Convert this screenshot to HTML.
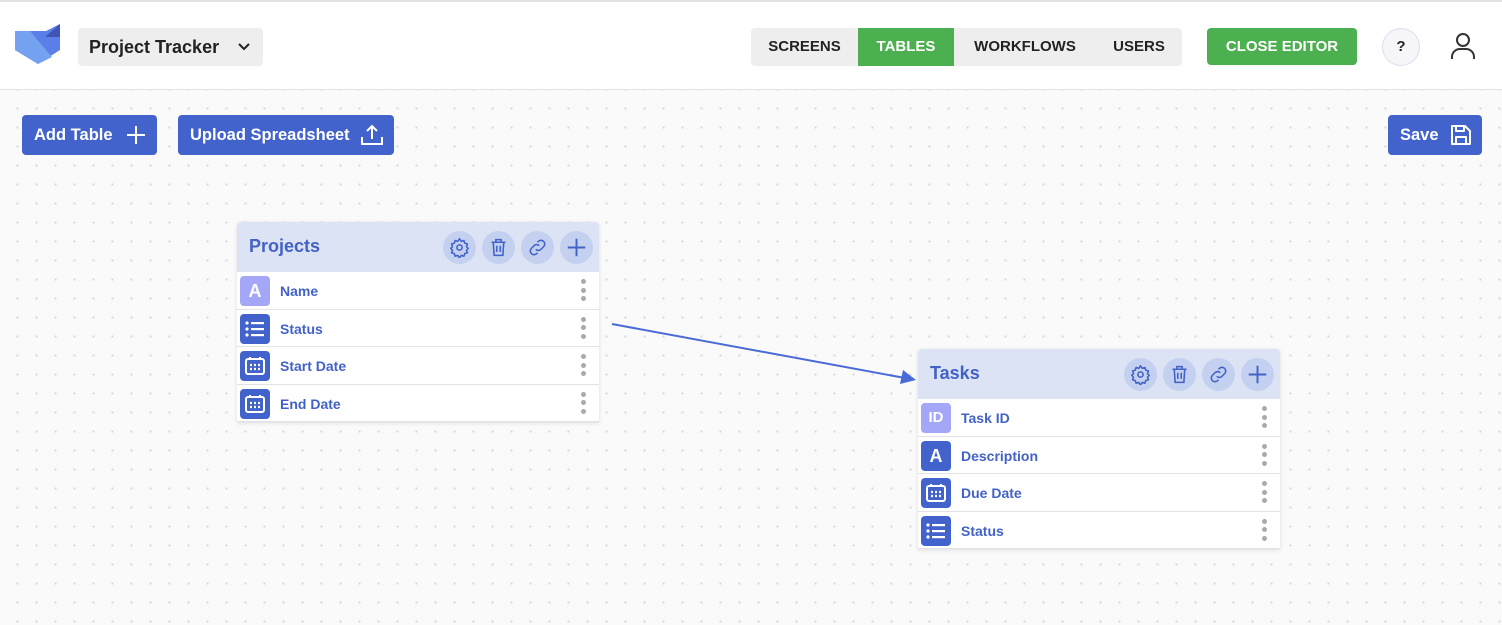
<!DOCTYPE html>
<html><head><meta charset="utf-8"><style>
*{box-sizing:border-box;margin:0;padding:0}
body{width:1502px;height:625px;overflow:hidden;font-family:"Liberation Sans",sans-serif;position:relative;background:#fafafb;
background-image:radial-gradient(circle,#d6d8dd 1px,transparent 1.3px);background-size:19px 19px;background-position:8px 4px}
.hdr{position:absolute;left:0;top:0;width:1502px;height:90px;background:#fff;border-top:2px solid #e3e3e3;border-bottom:1px solid #e3e3e3}
.abs{position:absolute}
.proj{left:78px;top:26px;width:185px;height:38px;background:#eeeeef;border-radius:4px;font-weight:bold;font-size:18px;color:#222;padding:9px 11px}
.tabs{left:751px;top:26px;width:431px;height:38px;background:#eeeeef;border-radius:4px;display:flex;font-weight:bold;font-size:15px;color:#222}
.tabs div{height:38px;line-height:38px;text-align:center}
.close{left:1207px;top:26px;width:150px;height:37px;background:#4caf50;color:#fff;border-radius:4px;font-weight:bold;font-size:15px;text-align:center;line-height:37px}
.q{left:1382px;top:26px;width:38px;height:38px;border-radius:50%;border:1px solid #dde;background:#f6f6f9;text-align:center;line-height:36px;font-weight:bold;font-size:15px;color:#222}
.btn{height:40px;top:115px;background:#4262cc;color:#fff;border-radius:4px;font-weight:bold;font-size:16.5px;display:flex;align-items:center;padding-left:12px}
.btn svg{position:absolute;right:10px;top:9px}
.card{position:absolute;width:362px;background:#fff;box-shadow:0 1px 4px rgba(0,0,0,.12);border-radius:4px 4px 0 0}
.ch{height:50px;background:#dce3f5;border-radius:4px 4px 0 0;position:relative}
.ch .t{position:absolute;left:12px;top:14px;font-weight:bold;font-size:18px;color:#4262c7}
.cb{position:absolute;top:9px;width:33px;height:33px;border-radius:50%;background:#c4d0f0}
.cb svg{position:absolute;left:6px;top:6px}
.row{height:37.5px;border-bottom:1px solid #e2e2e6;position:relative}
.ic{position:absolute;left:3px;top:4px;width:30px;height:30px;border-radius:4px;background:#4262cc;color:#fff;font-weight:bold;text-align:center;line-height:30px;font-size:18px}
.ic.l{background:#a4a6f7}
.ic svg{position:absolute;left:4px;top:4px}
.row .n{position:absolute;left:43px;top:11px;font-weight:bold;font-size:14px;color:#4262c7}
.k{position:absolute;right:13px;top:7px;width:5px}
.k i{display:block;width:5px;height:5px;border-radius:50%;background:#aaa;margin-bottom:3.5px}
</style></head><body>
<div class="hdr">
<svg class="abs" style="left:0;top:-2px" width="70" height="70" viewBox="0 0 70 70"><polygon points="15,31 46,31 60,24 60,50 38,64 15,50" fill="#5b7fe8"/><polygon points="15,31 30,31 52,57 38,64 15,50" fill="#74a2f1"/><polygon points="60,24 60,37 45,37" fill="#3e55b5"/></svg>
<div class="abs proj">Project Tracker <svg style="position:absolute;right:12px;top:14px" width="14" height="10" viewBox="0 0 14 10"><path d="M2 2l5 5 5-5" stroke="#222" stroke-width="2" fill="none"/></svg></div>
<div class="abs tabs"><div style="width:107px">SCREENS</div><div style="width:96px;background:#4caf50;color:#fff">TABLES</div><div style="width:142px">WORKFLOWS</div><div style="width:86px">USERS</div></div>
<div class="abs close">CLOSE EDITOR</div>
<div class="abs q">?</div>
<svg class="abs" style="left:1450px;top:30px" width="26" height="28" viewBox="0 0 26 28"><circle cx="13" cy="8" r="6" stroke="#333" stroke-width="2" fill="none"/><path d="M2 27v-2a8 8 0 0 1 8-8h6a8 8 0 0 1 8 8v2" stroke="#333" stroke-width="2" fill="none"/></svg>
</div>
<div class="abs btn" style="left:22px;width:135px">Add Table<svg width="22" height="22" viewBox="0 0 22 22"><path d="M11 2v18M2 11h18" stroke="#fff" stroke-width="2"/></svg></div>
<div class="abs btn" style="left:178px;width:216px">Upload Spreadsheet<svg width="24" height="22" viewBox="0 0 24 22"><path d="M12 15V2M7 7l5-5 5 5M2 13v7h20v-7" stroke="#fff" stroke-width="2" fill="none"/></svg></div>
<div class="abs btn" style="left:1388px;width:94px">Save<svg width="22" height="22" viewBox="0 0 22 22"><path d="M2 2h13l5 5v13H2z M6 2v5h8V2 M6 20v-7h10v7" stroke="#fff" stroke-width="2" fill="none" stroke-linejoin="round"/></svg></div>
<svg class="abs" style="left:0;top:0" width="1502" height="625"><line x1="612" y1="324" x2="905" y2="378" stroke="#4a6ad6" stroke-width="2"/><polygon points="916,380 900,384 903,370" fill="#4a6ad6"/></svg>
<div class="card" style="left:237px;top:222px">
<div class="ch"><div class="t">Projects</div>
<div class="cb" style="left:206px"><svg width="21" height="21" viewBox="0 0 24 24" fill="none" stroke="#4262c7" stroke-width="1.8"><circle cx="12" cy="12" r="3"/><path d="M12 2l2 3 3-1 1 3 3 1-1 3 2 2-2 2 1 3-3 1-1 3-3-1-2 3-2-3-3 1-1-3-3-1 1-3-2-2 2-2-1-3 3-1 1-3 3 1z" stroke-linejoin="round"/></svg></div>
<div class="cb" style="left:245px"><svg width="21" height="21" viewBox="0 0 24 24" fill="none" stroke="#4262c7" stroke-width="1.8"><path d="M4 6h16M9 6V3h6v3M6 6l1 15h10l1-15M10 10v7M14 10v7"/></svg></div>
<div class="cb" style="left:284px"><svg width="21" height="21" viewBox="0 0 24 24" fill="none" stroke="#4262c7" stroke-width="1.8"><path d="M10 14a4 4 0 0 0 6 0l3-3a4 4 0 0 0-6-6l-1 1M14 10a4 4 0 0 0-6 0l-3 3a4 4 0 0 0 6 6l1-1"/></svg></div>
<div class="cb" style="left:323px"><svg width="21" height="21" viewBox="0 0 24 24" fill="none" stroke="#4262c7" stroke-width="2.2"><path d="M12 2v20M2 12h20"/></svg></div>
</div>
<div class="row"><div class="ic l">A</div><div class="n">Name</div><div class="k"><i></i><i></i><i></i></div></div>
<div class="row"><div class="ic"><svg width="22" height="22" viewBox="0 0 22 22" fill="#fff"><circle cx="3" cy="5" r="1.6"/><circle cx="3" cy="11" r="1.6"/><circle cx="3" cy="17" r="1.6"/><rect x="7" y="4" width="13" height="2.2"/><rect x="7" y="10" width="13" height="2.2"/><rect x="7" y="16" width="13" height="2.2"/></svg></div><div class="n">Status</div><div class="k"><i></i><i></i><i></i></div></div>
<div class="row"><div class="ic"><svg width="22" height="22" viewBox="0 0 22 22" fill="none" stroke="#fff" stroke-width="2"><rect x="2" y="4" width="18" height="15" rx="2"/><path d="M6 2v3M16 2v3" /><path d="M6 10h2M10 10h2M14 10h2M6 14h2M10 14h2M14 14h2" stroke-width="2.2"/></svg></div><div class="n">Start Date</div><div class="k"><i></i><i></i><i></i></div></div>
<div class="row"><div class="ic"><svg width="22" height="22" viewBox="0 0 22 22" fill="none" stroke="#fff" stroke-width="2"><rect x="2" y="4" width="18" height="15" rx="2"/><path d="M6 2v3M16 2v3" /><path d="M6 10h2M10 10h2M14 10h2M6 14h2M10 14h2M14 14h2" stroke-width="2.2"/></svg></div><div class="n">End Date</div><div class="k"><i></i><i></i><i></i></div></div>
</div>
<div class="card" style="left:918px;top:349px">
<div class="ch"><div class="t">Tasks</div>
<div class="cb" style="left:206px"><svg width="21" height="21" viewBox="0 0 24 24" fill="none" stroke="#4262c7" stroke-width="1.8"><circle cx="12" cy="12" r="3"/><path d="M12 2l2 3 3-1 1 3 3 1-1 3 2 2-2 2 1 3-3 1-1 3-3-1-2 3-2-3-3 1-1-3-3-1 1-3-2-2 2-2-1-3 3-1 1-3 3 1z" stroke-linejoin="round"/></svg></div>
<div class="cb" style="left:245px"><svg width="21" height="21" viewBox="0 0 24 24" fill="none" stroke="#4262c7" stroke-width="1.8"><path d="M4 6h16M9 6V3h6v3M6 6l1 15h10l1-15M10 10v7M14 10v7"/></svg></div>
<div class="cb" style="left:284px"><svg width="21" height="21" viewBox="0 0 24 24" fill="none" stroke="#4262c7" stroke-width="1.8"><path d="M10 14a4 4 0 0 0 6 0l3-3a4 4 0 0 0-6-6l-1 1M14 10a4 4 0 0 0-6 0l-3 3a4 4 0 0 0 6 6l1-1"/></svg></div>
<div class="cb" style="left:323px"><svg width="21" height="21" viewBox="0 0 24 24" fill="none" stroke="#4262c7" stroke-width="2.2"><path d="M12 2v20M2 12h20"/></svg></div>
</div>
<div class="row"><div class="ic l" style="font-size:15px">ID</div><div class="n">Task ID</div><div class="k"><i></i><i></i><i></i></div></div>
<div class="row"><div class="ic">A</div><div class="n">Description</div><div class="k"><i></i><i></i><i></i></div></div>
<div class="row"><div class="ic"><svg width="22" height="22" viewBox="0 0 22 22" fill="none" stroke="#fff" stroke-width="2"><rect x="2" y="4" width="18" height="15" rx="2"/><path d="M6 2v3M16 2v3" /><path d="M6 10h2M10 10h2M14 10h2M6 14h2M10 14h2M14 14h2" stroke-width="2.2"/></svg></div><div class="n">Due Date</div><div class="k"><i></i><i></i><i></i></div></div>
<div class="row"><div class="ic"><svg width="22" height="22" viewBox="0 0 22 22" fill="#fff"><circle cx="3" cy="5" r="1.6"/><circle cx="3" cy="11" r="1.6"/><circle cx="3" cy="17" r="1.6"/><rect x="7" y="4" width="13" height="2.2"/><rect x="7" y="10" width="13" height="2.2"/><rect x="7" y="16" width="13" height="2.2"/></svg></div><div class="n">Status</div><div class="k"><i></i><i></i><i></i></div></div>
</div>
</body></html>
